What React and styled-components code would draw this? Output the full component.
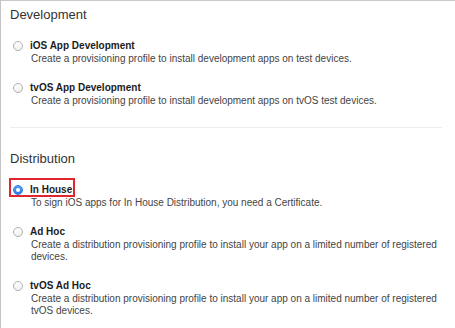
import React from "react";
import styled, { createGlobalStyle } from "styled-components";

const Global = createGlobalStyle`
  html, body { margin: 0; padding: 0; background: #ffffff; }
  body { font-family: "Liberation Sans", Arial, sans-serif; }
`;

const Page = styled.div`
  width: 455px;
  height: 328px;
  box-sizing: border-box;
  border-top: 1px solid #c9c9c9;
  border-left: 1px solid #c4c4c4;
  padding: 6px 13px 0 9px;
  overflow: hidden;
  background: #fff;
`;

const Section = styled.section`
  display: flex;
  flex-direction: column;
`;

const Heading = styled.h2`
  margin: 0 0 16px 0;
  font-size: 13px;
  line-height: 16px;
  font-weight: normal;
  color: #333;
`;

const List = styled.div`
  display: flex;
  flex-direction: column;
  gap: 16px;
  padding-left: 3px;
`;

const Item = styled.div`
  display: flex;
  flex-direction: column;
  align-items: flex-start;
`;

const Header = styled.label`
  position: relative;
  display: inline-flex;
  align-items: center;
  gap: 7px;
  height: 13px;
  ${(p) =>
    p.$highlight &&
    `
    &::after {
      content: "";
      position: absolute;
      left: -4px;
      top: -5px;
      right: -3px;
      bottom: -1px;
      border: 2px solid #e0262c;
      pointer-events: none;
    }
  `}
`;

const Radio = styled.span`
  box-sizing: border-box;
  width: 10px;
  height: 10px;
  border-radius: 50%;
  flex: none;
  display: flex;
  align-items: center;
  justify-content: center;
  border: 1px solid ${(p) => (p.$checked ? "#2f7fe6" : "#b0b0b0")};
  background: ${(p) =>
    p.$checked
      ? "linear-gradient(#5aa2f5, #2a78e2)"
      : "linear-gradient(#ffffff, #f1f1f1)"};
  &::after {
    content: "";
    width: 4px;
    height: 4px;
    border-radius: 50%;
    background: #fff;
    display: ${(p) => (p.$checked ? "block" : "none")};
  }
`;

const Title = styled.span`
  font-size: 10px;
  line-height: 13px;
  font-weight: bold;
  color: #1c1c1c;
`;

const Desc = styled.p`
  margin: 1px 0 0 0;
  padding-left: 18px;
  font-size: 10px;
  line-height: 12px;
  color: #444;
`;

const Divider = styled.hr`
  border: none;
  height: 1px;
  background: #ececec;
  margin: 20px 0 23px 0;
`;

const dev = [
  {
    title: "iOS App Development",
    desc: "Create a provisioning profile to install development apps on test devices.",
  },
  {
    title: "tvOS App Development",
    desc: "Create a provisioning profile to install development apps on tvOS test devices.",
  },
];

const dist = [
  {
    title: "In House",
    desc: "To sign iOS apps for In House Distribution, you need a Certificate.",
    checked: true,
  },
  {
    title: "Ad Hoc",
    desc: "Create a distribution provisioning profile to install your app on a limited number of registered devices.",
  },
  {
    title: "tvOS Ad Hoc",
    desc: "Create a distribution provisioning profile to install your app on a limited number of registered tvOS devices.",
  },
];

function Option({ title, desc, checked }) {
  return (
    <Item>
      <Header $highlight={checked}>
        <Radio $checked={checked} />
        <Title>{title}</Title>
      </Header>
      <Desc>{desc}</Desc>
    </Item>
  );
}

export default function App() {
  return (
    <>
      <Global />
      <Page>
        <Section>
          <Heading>Development</Heading>
          <List>
            {dev.map((o) => (
              <Option key={o.title} {...o} />
            ))}
          </List>
        </Section>
        <Divider />
        <Section>
          <Heading>Distribution</Heading>
          <List>
            {dist.map((o) => (
              <Option key={o.title} {...o} />
            ))}
          </List>
        </Section>
      </Page>
    </>
  );
}
